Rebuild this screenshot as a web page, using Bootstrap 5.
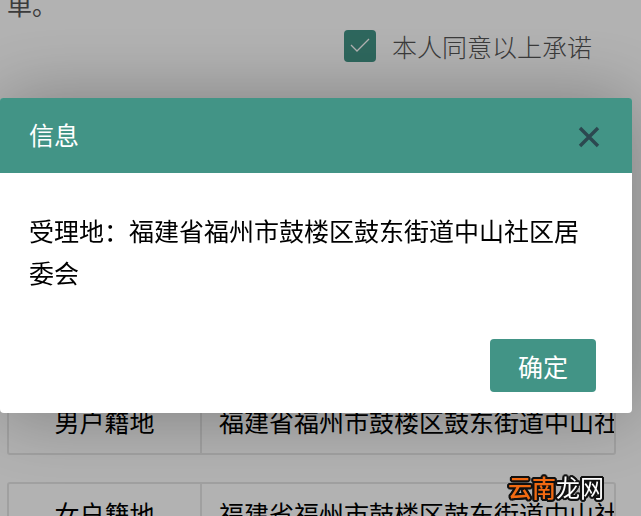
<!DOCTYPE html>
<html lang="zh-CN">
<head>
<meta charset="utf-8">
<meta name="viewport" content="width=device-width, initial-scale=1">
<title>信息</title>
<link href="https://cdn.jsdelivr.net/npm/bootstrap@5.3.0/dist/css/bootstrap.min.css" rel="stylesheet">
<style>
  body { font-family: "Noto Sans CJK SC", sans-serif; font-size: 25px; line-height: 42px; color: #000; background: #fff; height: 100vh; }
  .form-page { padding: 0 25px 0 7px; }
  /* tail of the notice, scrolled partly out of view */
  .notice { margin-top: -17px; color: #555; }
  .agree { margin: 0 24px 0 0; color: #555; font-weight: 300; }
  .agree .form-check-input { width: 32px; height: 32px; border-radius: 4px; border: 0; }
  .agree .form-check-input:checked { background-color: #429486; background-image: url("data:image/svg+xml,%3Csvg xmlns='http://www.w3.org/2000/svg' viewBox='0 0 32 32'%3E%3Cpath d='M7 15l6 6 12-12' fill='none' stroke='%23fff' stroke-width='1.3'/%3E%3C/svg%3E"); }
  .records { margin-top: 323px; gap: 27px; }
  .record { height: 65px; border: 2px solid #e6e6e6; border-radius: 3px; }
  .record-label { width: 193px; padding-bottom: 4px; border-right: 2px solid #e6e6e6; }
  .record-value { border: 0; background: transparent; color: #000; padding: 0 0 4px 17px; min-width: 0; }
  .modal-backdrop { --bs-backdrop-opacity: .3; }
  .notice-dialog { margin: 98px 9px 0 0; max-width: none; }
  .notice-dialog .modal-content { border: 0; border-radius: 4px; box-shadow: 1px 1px 75px rgba(0,0,0,.3); color: #000; }
  .notice-dialog .modal-header { background: #429486; color: #fff; height: 75px; padding: 0 29px; border: 0; border-radius: 3px 3px 0 0; }
  .notice-dialog .modal-title { font-size: 25px; line-height: 42px; font-weight: 400; padding-bottom: 4px; }
  .close-btn { width: 28px; height: 28px; color: #2c4850; }
  .notice-dialog .modal-body { padding: 36px 29px 46px; }
  .notice-dialog .modal-footer { padding: 0 36px 21px; border: 0; }
  .ok-btn { --bs-btn-bg: #429486; --bs-btn-color: #fff; --bs-btn-hover-bg: #38806f; --bs-btn-hover-color: #fff; width: 106px; height: 53px; margin: 0; padding: 0; border: 0; border-radius: 4px; font-size: 25px; line-height: 52px; }
  .site-tag { right: 37px; bottom: 8px; z-index: 1100; font-size: 24px; line-height: 42px; font-weight: 400; color: #fff;
    text-shadow: 2px 0 #111, -2px 0 #111, 0 2px #111, 0 -2px #111, 1px 2px #111, -1px 2px #111, 1px -2px #111, -1px -2px #111, 2px 1px #111, -2px 1px #111, 2px -1px #111, -2px -1px #111; }
  .site-tag span { color: #f26a12; font-weight: 500; }
</style>
</head>
<body class="overflow-hidden">
<main class="form-page">
  <p class="notice mb-0">单。</p>
  <div class="agree d-flex justify-content-end align-items-center">
    <input class="form-check-input m-0 me-3" type="checkbox" id="agree" checked>
    <label for="agree">本人同意以上承诺</label>
  </div>
  <div class="records d-flex flex-column">
    <div class="record d-flex">
      <label class="record-label d-flex align-items-center justify-content-center" for="male">男户籍地</label>
      <input class="record-value flex-grow-1" id="male" type="text" value="福建省福州市鼓楼区鼓东街道中山社区居委会">
    </div>
    <div class="record d-flex">
      <label class="record-label d-flex align-items-center justify-content-center" for="female">女户籍地</label>
      <input class="record-value flex-grow-1" id="female" type="text" value="福建省福州市鼓楼区鼓东街道中山社区居委会">
    </div>
  </div>
</main>

<div class="modal-backdrop show"></div>
<div class="modal show d-block overflow-hidden" role="dialog" aria-modal="true" aria-labelledby="dialogTitle">
  <div class="modal-dialog notice-dialog">
    <div class="modal-content">
      <div class="modal-header">
        <h1 class="modal-title" id="dialogTitle">信息</h1>
        <button type="button" class="close-btn btn p-0 border-0 d-flex" aria-label="关闭">
          <svg viewBox="0 0 28 28" width="28" height="28" aria-hidden="true"><path d="M5 6l18 18M23 6L5 24" stroke="currentColor" stroke-width="3.4" fill="none"/></svg>
        </button>
      </div>
      <div class="modal-body">受理地：福建省福州市鼓楼区鼓东街道中山社区居委会</div>
      <div class="modal-footer">
        <button type="button" class="btn ok-btn">确定</button>
      </div>
    </div>
  </div>
</div>
<div class="site-tag position-fixed"><span>云南</span>龙网</div>
<script src="https://cdn.jsdelivr.net/npm/bootstrap@5.3.0/dist/js/bootstrap.bundle.min.js"></script>
</body>
</html>
